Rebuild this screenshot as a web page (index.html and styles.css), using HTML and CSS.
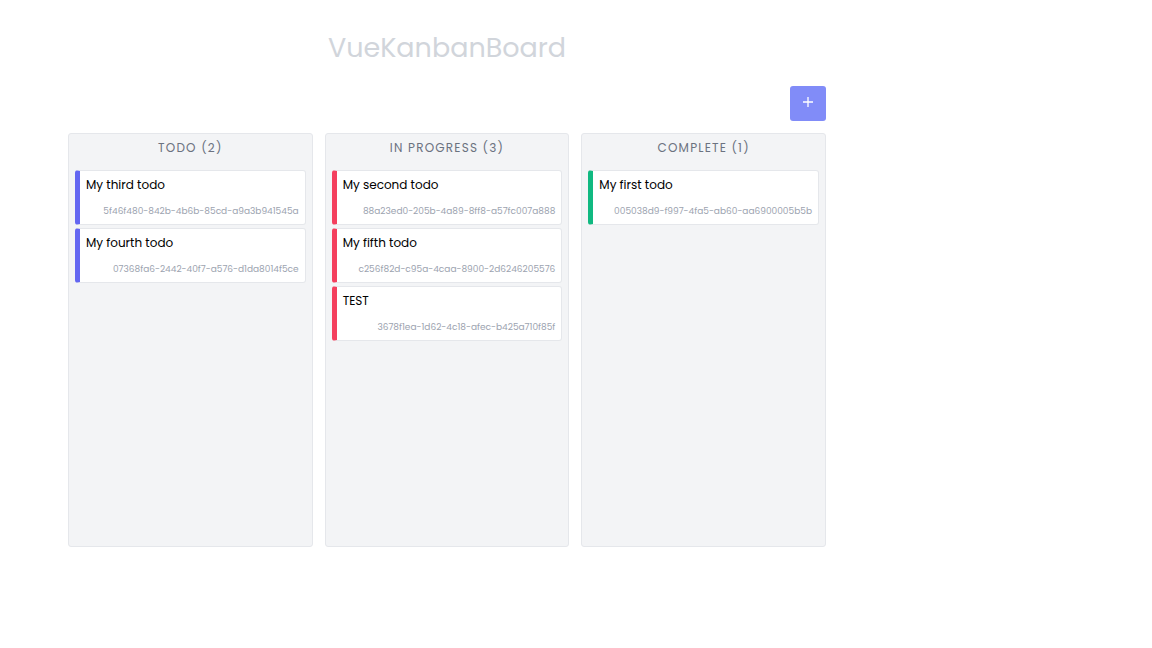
FILE: index.html
```html
<!DOCTYPE html>
<html lang="en">
<head>
<meta charset="utf-8">
<meta name="viewport" content="width=device-width, initial-scale=1">
<title>VueKanbanBoard</title>
<link rel="stylesheet" href="styles.css">
</head>
<body>
<main class="app">
  <h1 class="title">VueKanbanBoard</h1>
  <div class="toolbar">
    <button class="add" type="button" aria-label="Add todo">
      <svg class="add-icon" viewBox="0 0 10 10" aria-hidden="true"><path d="M5 0v10M0 5h10"/></svg>
    </button>
  </div>
  <div class="board">
    <section class="column todo">
      <h2 class="heading">TODO (2)</h2>
      <article class="card"><p class="name">My third todo</p><p class="id">5f46f480-842b-4b6b-85cd-a9a3b941545a</p></article>
      <article class="card"><p class="name">My fourth todo</p><p class="id">07368fa6-2442-40f7-a576-d1da8014f5ce</p></article>
    </section>
    <section class="column progress">
      <h2 class="heading">IN PROGRESS (3)</h2>
      <article class="card"><p class="name">My second todo</p><p class="id">88a23ed0-205b-4a89-8ff8-a57fc007a888</p></article>
      <article class="card"><p class="name">My fifth todo</p><p class="id">c256f82d-c95a-4caa-8900-2d6246205576</p></article>
      <article class="card"><p class="name">TEST</p><p class="id">3678f1ea-1d62-4c18-afec-b425a710f85f</p></article>
    </section>
    <section class="column complete">
      <h2 class="heading">COMPLETE (1)</h2>
      <article class="card"><p class="name">My first todo</p><p class="id">005038d9-f997-4fa5-ab60-aa6900005b5b</p></article>
    </section>
  </div>
</main>
</body>
</html>
```
FILE: styles.css
```css
* { box-sizing: border-box; margin: 0; }

body {
  background: #fff;
  color: #000;
  font-family: Poppins, Inter, "Liberation Sans", sans-serif;
}

.app {
  max-width: 894px;
  padding: 24px 68px;
}

.title {
  color: #d1d5db;
  font-size: 27px;
  font-weight: 400;
  line-height: 48px;
  text-align: center;
}

.toolbar {
  display: flex;
  justify-content: flex-end;
  padding: 14px 0 12px;
}

.add {
  display: flex;
  justify-content: center;
  width: 36px;
  height: 35px;
  padding: 11px 0;
  border: 0;
  border-radius: 3px;
  background: #818cf8;
  color: #fff;
  cursor: pointer;
}

.add-icon {
  width: 10px;
  height: 10px;
  fill: none;
  stroke: currentColor;
  stroke-width: 1.3;
}

.board {
  display: grid;
  grid-template-columns: repeat(3, minmax(0, 1fr));
  gap: 12px;
}

.column {
  display: flex;
  flex-direction: column;
  gap: 3px;
  min-height: 414px;
  padding: 0 6px 6px;
  border: 1px solid #e5e7eb;
  border-radius: 3px;
  background: #f3f4f6;
}

.heading {
  padding: 4px 0 9px;
  color: #6b7280;
  font-size: 12px;
  font-weight: 400;
  letter-spacing: 0.1em;
  line-height: 20px;
  text-align: center;
}

.card {
  padding: 4px 6px 5px;
  border: 1px solid #e5e7eb;
  border-left: 5px solid;
  border-radius: 3px;
  background: #fff;
}

.todo .card { border-left-color: #6366f1; }
.progress .card { border-left-color: #f43f5e; }
.complete .card { border-left-color: #10b981; }

.name {
  font-size: 12px;
  line-height: 20px;
}

.id {
  padding-top: 8px;
  color: #9ca3af;
  font-size: 9px;
  line-height: 16px;
  text-align: right;
}
```
